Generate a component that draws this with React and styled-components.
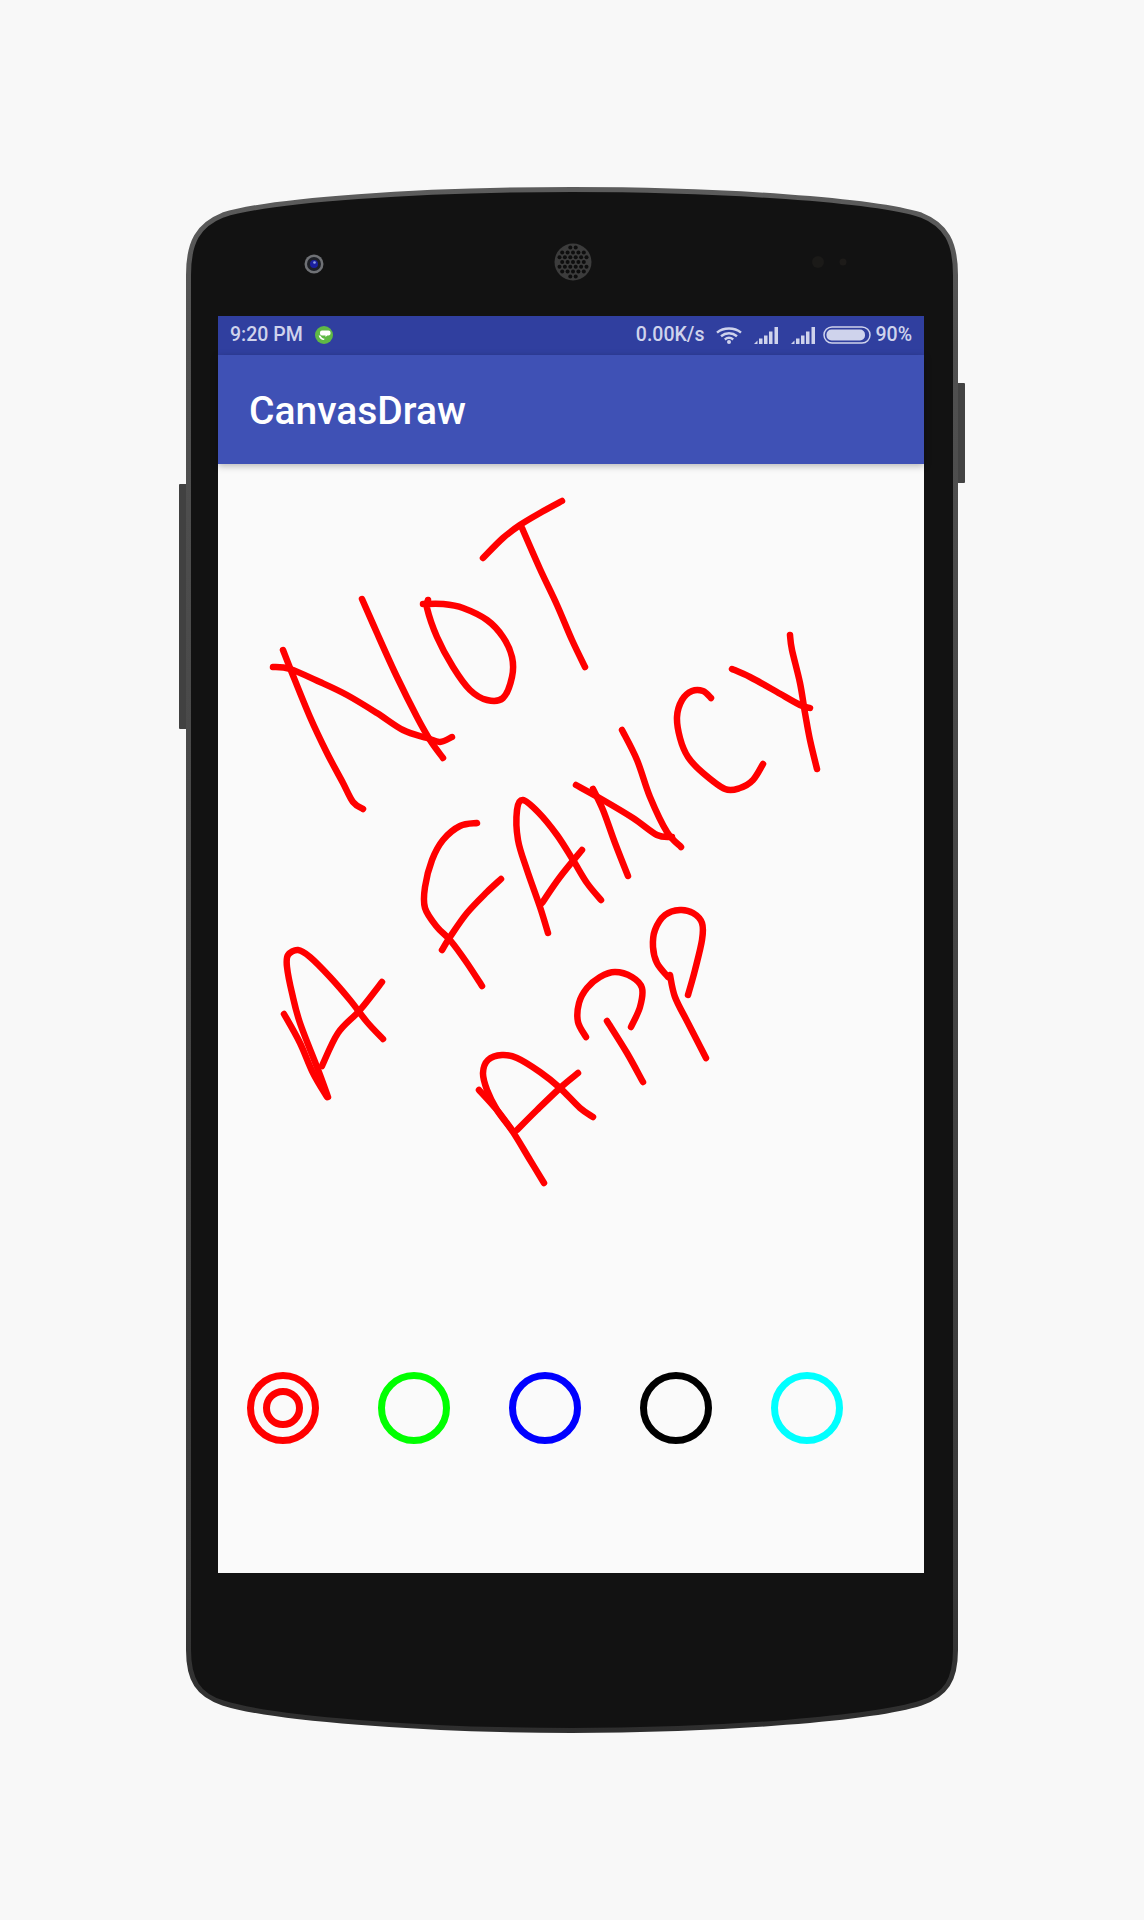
import React from "react";
import styled, { createGlobalStyle } from "styled-components";

// red ink strokes, in page coordinates (the canvas svg viewBox starts at 218,464)
const inkStrokes = [
  // NOT
  [[283,650],[292,673],[310,717],[327,753],[343,783],[353,802],[363,809]],
  [[273,667],[290,669],[320,682],[347,695],[377,713],[403,730],[427,738],[440,742],[452,737]],
  [[362,599],[377,633],[397,677],[417,717],[430,740],[443,758]],
  [[428,600],[427,608],[437,637],[453,667],[470,690],[487,700],[503,698],[512,677],[512,657],[503,637],[487,620],[463,608],[443,604],[423,604]],
  [[562,501],[540,513],[520,525],[503,538],[483,558]],
  [[522,528],[540,569],[557,605],[572,640],[585,667]],
  // FANCY
  [[477,823],[460,826],[443,840],[432,860],[425,887],[425,908],[437,927],[450,940],[467,963],[482,986]],
  [[501,879],[487,892],[467,913],[450,937],[442,950]],
  [[548,933],[540,907],[527,870],[518,840],[517,810],[523,800],[538,812],[557,835],[573,860],[587,883],[601,900]],
  [[542,903],[560,877],[582,850]],
  [[593,789],[603,810],[615,843],[628,876]],
  [[576,785],[603,800],[633,818],[657,835],[672,837]],
  [[622,730],[637,760],[650,797],[667,832],[681,847]],
  [[711,698],[703,691],[692,691],[682,700],[677,717],[680,738],[688,757],[703,773],[725,789],[740,788],[753,780],[763,764]],
  [[732,669],[750,677],[777,692],[800,705],[810,708]],
  [[790,635],[792,650],[800,683],[805,713],[810,740],[817,769]],
  // A
  [[328,1097],[317,1067],[300,1023],[292,993],[287,967],[288,955],[298,950],[310,957],[330,977],[350,1000],[367,1022],[383,1039]],
  [[284,1014],[300,1043],[313,1073],[327,1097]],
  [[322,1066],[338,1033],[360,1010],[382,982]],
  // APP
  [[593,1117],[580,1108],[560,1088],[540,1072],[517,1058],[502,1055],[488,1060],[483,1073],[487,1090],[497,1110],[513,1132],[530,1160],[544,1183]],
  [[479,1090],[497,1110],[512,1130]],
  [[517,1130],[537,1110],[560,1088],[578,1073]],
  [[586,1037],[578,1022],[579,1003],[587,988],[600,977],[615,972],[632,977],[642,988],[640,1007],[631,1027]],
  [[607,1021],[627,1053],[643,1082]],
  [[688,995],[695,970],[702,940],[702,923],[693,913],[680,910],[665,915],[655,930],[653,947],[657,963],[668,977]],
  [[670,975],[675,997],[688,1023],[706,1058]],
];

const swatches = [
  { color: "#ff0000", selected: true },
  { color: "#00ff00" },
  { color: "#0000ff" },
  { color: "#000000" },
  { color: "#00ffff" },
];

// catmull-rom through the points so the strokes come out hand drawn but smooth
const toPath = (pts) => {
  let d = `M${pts[0][0]} ${pts[0][1]}`;
  for (let i = 0; i < pts.length - 1; i++) {
    const p0 = pts[i - 1] || pts[i];
    const p1 = pts[i];
    const p2 = pts[i + 1];
    const p3 = pts[i + 2] || p2;
    const c1x = p1[0] + (p2[0] - p0[0]) / 6;
    const c1y = p1[1] + (p2[1] - p0[1]) / 6;
    const c2x = p2[0] - (p3[0] - p1[0]) / 6;
    const c2y = p2[1] - (p3[1] - p1[1]) / 6;
    d += ` C${c1x.toFixed(1)} ${c1y.toFixed(1)} ${c2x.toFixed(1)} ${c2y.toFixed(1)} ${p2[0]} ${p2[1]}`;
  }
  return d;
};

const speakerHoles = () => {
  const holes = [];
  for (let row = -3; row <= 3; row++) {
    for (let col = -3; col <= 3; col++) {
      const x = 573 + col * 5.4 + (row % 2 ? 2.7 : 0);
      const y = 262 + row * 4.8;
      if (Math.hypot(x - 573, y - 262) < 16) holes.push([x, y]);
    }
  }
  return holes;
};

const bodyPath =
  "M188.500 275 C188.500 242 198 225 223 215 C270 200 420 189.500 572 189.500 C724 189.500 874 200 921 215 C946 225 955.500 242 955.500 275 L955.500 1650 C955.500 1680 946 1695 921 1703 C874 1718 724 1730.500 572 1730.500 C420 1730.500 270 1718 223 1703 C198 1695 188.500 1680 188.500 1650 Z";

const HandsetDrawing = () => (
  <Handset viewBox="186 187 772 1546">
    <defs>
      <linearGradient id="rim" x1="0" y1="0" x2="0" y2="1">
        <stop offset="0" stopColor="#5c5c5c" />
        <stop offset="0.1" stopColor="#505050" />
        <stop offset="0.9" stopColor="#3a3a3a" />
        <stop offset="1" stopColor="#2e2e2e" />
      </linearGradient>
    </defs>
    <rect x="179" y="484" width="9" height="245" rx="1" fill="#414141" />
    <rect x="956" y="383" width="9" height="100" rx="1" fill="#434343" />
    <path d={bodyPath} fill="#121212" stroke="url(#rim)" strokeWidth="5" />
    <circle cx="314" cy="264" r="9.500" fill="#6f7175" />
    <circle cx="314" cy="264" r="7" fill="#1e2027" />
    <circle cx="314" cy="264" r="4" fill="#1b1f9e" />
    <circle cx="314.500" cy="262.500" r="1.300" fill="#8fa0e8" />
    <circle cx="573" cy="262" r="18.500" fill="#3c3c3c" />
    {speakerHoles().map(([x, y]) => (
      <circle key={`${x}-${y}`} cx={x} cy={y} r="2" fill="#0e0e0e" />
    ))}
    <circle cx="818" cy="262" r="6" fill="#1b1a18" />
    <circle cx="843" cy="262" r="3.500" fill="#1d1b19" />
  </Handset>
);

const HangoutsIcon = () => (
  <svg width="18" height="18" viewBox="0 0 18 18">
    <circle cx="9" cy="9" r="9" fill="#5fb946" />
    <path d="M7 4.500h6.500a2 2 0 0 1 2 2v1a2 2 0 0 1-2 2h-1.200l-1.800 1.600V9.500H7a2 2 0 0 1-2-2v-1a2 2 0 0 1 2-2z" fill="#fff" />
    <path d="M3.600 9.400c.6 2.600 2.600 4.400 5.400 4.700l.6-1.300c-1.900-.2-3.400-1.500-4.200-3.400z" fill="#fff" />
  </svg>
);

const WifiIcon = () => (
  <svg width="26" height="17" viewBox="0 0 26 17" fill="none" stroke="#cfd3ec" strokeWidth="2.500">
    <path d="M1 5.600C7.600 .2 18.400 .2 25 5.600" />
    <path d="M5 9.200C9.800 5.400 16.200 5.400 21 9.200" />
    <path d="M8.800 12.400C11.400 10.400 14.600 10.400 17.200 12.400" />
    <circle cx="13" cy="15" r="2" fill="#cfd3ec" stroke="none" />
  </svg>
);

const SignalIcon = () => (
  <svg width="25" height="17" viewBox="0 0 25 17" fill="#cfd3ec">
    <path d="M0 17l3.500-3.500v3.500z" />
    <rect x="5" y="11.500" width="3.500" height="5.500" />
    <rect x="10" y="8.500" width="3.500" height="8.500" />
    <rect x="15" y="4.500" width="3.500" height="12.500" />
    <rect x="20.500" y="0" width="3.500" height="17" />
  </svg>
);

const BatteryIcon = () => (
  <svg width="48" height="18" viewBox="0 0 48 18">
    <rect x="1" y="1" width="46" height="16" rx="8" fill="none" stroke="#cfd3ec" strokeWidth="1.500" />
    <rect x="3.500" y="3.500" width="38.500" height="11" rx="5" fill="#cfd3ec" />
  </svg>
);

const App = () => (
  <Page>
    <GlobalStyle />
    <Device>
      <HandsetDrawing />
      <Screen>
        <StatusBar>
          <StatusGroup>
            <StatusText>9:20 PM</StatusText>
            <HangoutsIcon />
          </StatusGroup>
          <StatusGroup>
            <StatusText>0.00K/s</StatusText>
            <WifiIcon />
            <SignalIcon />
            <SignalIcon />
            <BatteryGroup>
              <BatteryIcon />
              <StatusText>90%</StatusText>
            </BatteryGroup>
          </StatusGroup>
        </StatusBar>
        <AppBar>CanvasDraw</AppBar>
        <Content>
          <Ink viewBox="218 464 706 908">
            {inkStrokes.map((pts) => (
              <path key={pts[0].join()} d={toPath(pts)} />
            ))}
          </Ink>
          <Palette>
            {swatches.map(({ color, selected }) => (
              <Swatch key={color} $color={color}>
                {selected && <InnerRing $color={color} />}
              </Swatch>
            ))}
          </Palette>
        </Content>
      </Screen>
    </Device>
  </Page>
);

const GlobalStyle = createGlobalStyle`
  html, body {
    margin: 0;
    background: #f8f8f8;
  }
`;

const Page = styled.div`
  width: 1144px;
  height: 1920px;
  padding-top: 187px;
  box-sizing: border-box;
  display: flex;
  justify-content: center;
  align-items: flex-start;
  font-family: Roboto, "Liberation Sans", sans-serif;
`;

const Device = styled.div`
  position: relative;
  width: 772px;
  height: 1546px;
  box-sizing: border-box;
  padding: 129px 34px 160px 32px;
  display: flex;
`;

const Handset = styled.svg`
  position: absolute;
  top: 0;
  left: 0;
  width: 772px;
  height: 1546px;
  overflow: visible;
`;

const Screen = styled.div`
  position: relative;
  flex: 1;
  display: flex;
  flex-direction: column;
  background: #fafafa;
`;

const StatusBar = styled.div`
  height: 39px;
  flex: none;
  box-sizing: border-box;
  background: #303f9f;
  padding: 0 12px 1px;
  display: flex;
  align-items: center;
  justify-content: space-between;
  color: #cfd3ec;
`;

const StatusGroup = styled.div`
  display: flex;
  align-items: center;
  gap: 12px;
`;

const BatteryGroup = styled.div`
  display: flex;
  align-items: center;
  gap: 4px;
  margin-left: -5px;
`;

const StatusText = styled.span`
  font-size: 19.5px;
  font-weight: 500;
  line-height: 38px;
`;

const AppBar = styled.header`
  position: relative;
  height: 109px;
  flex: none;
  box-sizing: border-box;
  padding: 3px 0 0 31px;
  display: flex;
  align-items: center;
  background: #3f51b5;
  color: #ffffff;
  font-size: 39px;
  font-weight: 500;
  box-shadow: 0 2px 7px rgba(0, 0, 0, 0.28);
`;

const Content = styled.main`
  flex: 1;
  display: flex;
  flex-direction: column;
`;

const Ink = styled.svg`
  display: block;
  width: 706px;
  height: 908px;
  flex: none;
  fill: none;
  stroke: #ff0000;
  stroke-width: 6.5;
  stroke-linecap: round;
  stroke-linejoin: round;
`;

const Palette = styled.div`
  display: flex;
  gap: 59px;
  padding-left: 29px;
`;

const Swatch = styled.div`
  width: 72px;
  height: 72px;
  box-sizing: border-box;
  border: 7px solid ${(p) => p.$color};
  border-radius: 50%;
  display: flex;
  align-items: center;
  justify-content: center;
`;

const InnerRing = styled.div`
  width: 40px;
  height: 40px;
  box-sizing: border-box;
  border: 7px solid ${(p) => p.$color};
  border-radius: 50%;
`;

export default App;
